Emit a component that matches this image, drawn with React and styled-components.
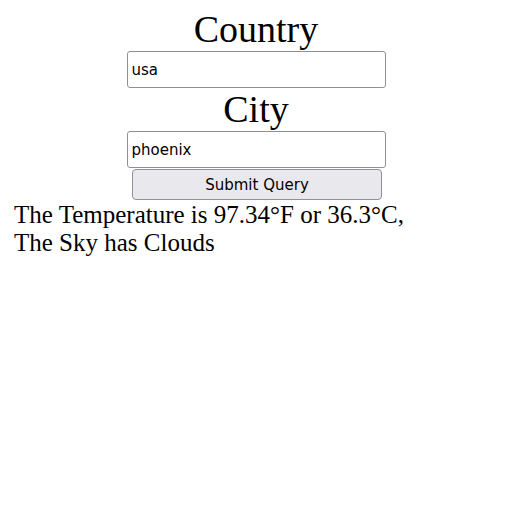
import React, { useState } from 'react'
import styled, { createGlobalStyle } from 'styled-components'

const GlobalStyle = createGlobalStyle`
  body {
    margin: 8px;
    background: #fff;
    font-family: "Liberation Serif", "Times New Roman", serif;
    color: #000;
  }
`

const Form = styled.form`
  display: flex;
  flex-direction: column;
  align-items: center;
  padding-left: 2px;
`

const Label = styled.label`
  font-size: 38px;
  line-height: 43px;
`

const TextInput = styled.input`
  box-sizing: border-box;
  width: 259px;
  height: 37px;
  padding: 0 4px;
  border: 1px solid #8f8f9d;
  border-radius: 3px;
  font-family: "DejaVu Sans", Verdana, sans-serif;
  font-size: 15px;
  color: #000;
  background: #fff;
  outline: none;
`

const SubmitButton = styled.button`
  box-sizing: border-box;
  width: 250px;
  height: 31px;
  margin: 1px 0 0 2px;
  padding-top: 2px;
  border: 1px solid #8f8f9d;
  border-radius: 4px;
  background: #e9e9ed;
  font-family: "DejaVu Sans", Verdana, sans-serif;
  font-size: 15px;
  color: #000;
`

const Result = styled.p`
  margin: 1px 0 0;
  padding-left: 6px;
  font-size: 25px;
  line-height: 28px;
`

export default function App() {
  const [country, setCountry] = useState('usa')
  const [city, setCity] = useState('phoenix')

  return (
    <>
      <GlobalStyle />
      <Form onSubmit={(e) => e.preventDefault()}>
        <Label htmlFor="country">Country</Label>
        <TextInput id="country" value={country} onChange={(e) => setCountry(e.target.value)} />
        <Label htmlFor="city">City</Label>
        <TextInput id="city" value={city} onChange={(e) => setCity(e.target.value)} />
        <SubmitButton type="submit">Submit Query</SubmitButton>
      </Form>
      <Result>
        The Temperature is 97.34°F or 36.3°C,
        <br />
        The Sky has Clouds
      </Result>
    </>
  )
}
